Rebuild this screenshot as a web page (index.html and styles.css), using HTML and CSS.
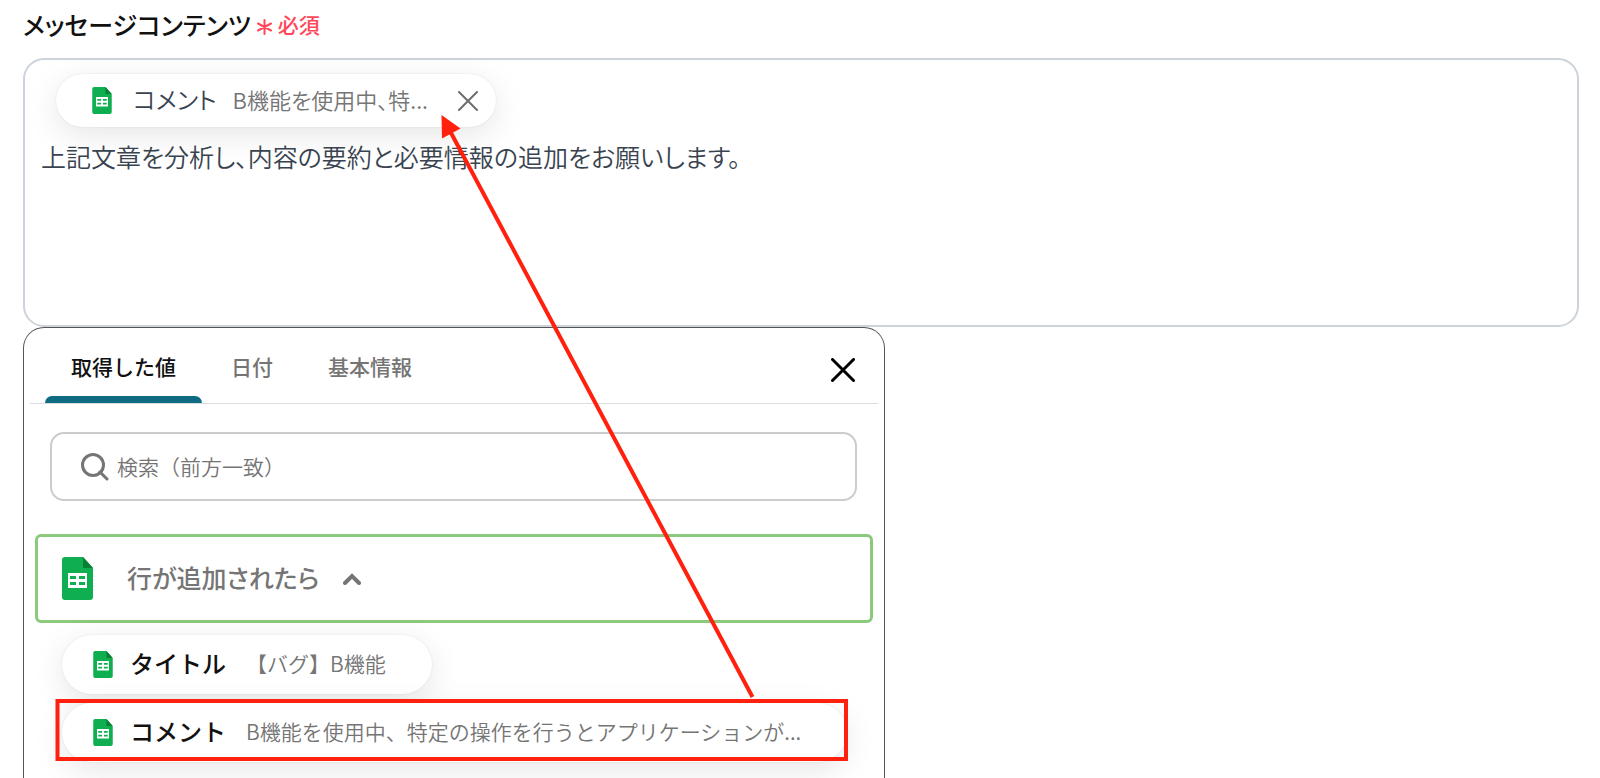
FILE: index.html
```html
<!DOCTYPE html>
<html lang="ja">
  <head>
    <meta charset="utf-8">
    <title>メッセージコンテンツ</title>
    <link rel="stylesheet" href="styles.css">
  </head>
  <body>
    <svg class="symbols" width="0" height="0">
      <symbol id="sheet" viewBox="0 0 31 43">
        <path fill="#0fae50" d="M3 0h18l10 11v29a3 3 0 0 1-3 3H3a3 3 0 0 1-3-3V3a3 3 0 0 1 3-3z"/>
        <path fill="#0a8132" d="M21 0l10 11H21z"/>
        <path fill="#fff" fill-rule="evenodd" d="M6 16h19v15H6zM8 19v3h6v-3zM17 19v3h6v-3zM8 25v3h6v-3zM17 25v3h6v-3z"/>
      </symbol>
    </svg>
    <div class="field">
      <div class="field-header">
        <label class="field-label" for="message">メッセージコンテンツ</label>
        <span class="required">
          <svg width="15" height="16" viewBox="0 0 15 16"><path d="M7.500 1v14M1 4.500l13 7M1 11.500l13-7"/></svg>
          必須
        </span>
      </div>
      <div class="editor">
        <div class="chip">
          <svg class="chip-icon"><use href="#sheet"/></svg>
          <span class="chip-name">コメント</span>
          <span class="chip-value">B機能を使用中、特...</span>
          <button class="chip-remove" type="button" aria-label="削除">
            <svg width="20" height="20" viewBox="0 0 20 20"><path d="M1 1l18 18M19 1L1 19"/></svg>
          </button>
        </div>
        <textarea class="message" id="message">上記文章を分析し、内容の要約と必要情報の追加をお願いします。</textarea>
      </div>
    </div>
    <div class="panel">
      <div class="panel-header">
        <div class="tabs" role="tablist">
          <button class="tab active" type="button" role="tab" aria-selected="true">取得した値</button>
          <button class="tab" type="button" role="tab">日付</button>
          <button class="tab" type="button" role="tab">基本情報</button>
        </div>
        <button class="panel-close" type="button" aria-label="閉じる">
          <svg width="24" height="24" viewBox="0 0 24 24"><path d="M1.500 1.500l21 21M22.500 1.500l-21 21"/></svg>
        </button>
      </div>
      <label class="search">
        <svg width="28" height="28" viewBox="0 0 28 28"><circle cx="12" cy="12" r="10.500"/><path d="M19 19l7 7"/></svg>
        <input type="search" placeholder="検索（前方一致）" aria-label="検索（前方一致）">
      </label>
      <button class="group" type="button" aria-expanded="true">
        <svg class="group-icon"><use href="#sheet"/></svg>
        <span class="group-name">行が追加されたら</span>
        <svg width="18" height="12" viewBox="0 0 18 12"><path class="chevron" d="M2 10l7-7 7 7"/></svg>
      </button>
      <div class="values">
        <button class="value" type="button">
          <svg class="chip-icon"><use href="#sheet"/></svg>
          <span class="value-name">タイトル</span>
          <span class="value-text">【バグ】B機能</span>
        </button>
        <button class="value" type="button">
          <svg class="chip-icon"><use href="#sheet"/></svg>
          <span class="value-name">コメント</span>
          <span class="value-text">B機能を使用中、特定の操作を行うとアプリケーションが...</span>
        </button>
      </div>
    </div>
    <svg class="annotation" width="900" height="778" viewBox="0 0 900 778">
      <rect x="57.500" y="701" width="788.500" height="58"/>
      <path class="arrow-line" d="M752.500 697L450 131"/>
      <path class="arrow-head" d="M441.500 115l19 13.500-18.500 10z"/>
    </svg>
  </body>
</html>
```
FILE: styles.css
```css
* {
  margin: 0;
  padding: 0;
  box-sizing: border-box;
}

body {
  position: relative;
  display: flex;
  flex-direction: column;
  height: 100vh;
  padding: 6px 21px 0 23px;
  background-color: #fff;
  color: #111;
  font-family: "Noto Sans CJK JP", sans-serif;
  font-size: 21px;
  line-height: 36px;
}

button,
input,
textarea {
  border: none;
  background: none;
  color: inherit;
  font: inherit;
}

button {
  cursor: pointer;
}

svg {
  flex: none;
  fill: none;
  stroke-linecap: round;
}

.symbols {
  position: absolute;
}

.field-header {
  display: flex;
  align-items: center;
  gap: 6px;
  height: 52px;
  padding-bottom: 16px;
}

.field-label {
  font-size: 25px;
  font-weight: 500;
  font-feature-settings: "palt";
}

.required {
  display: flex;
  align-items: center;
  gap: 6px;
  color: #ff4759;
  font-weight: 500;
}

.required svg {
  margin-top: 5px;
  stroke: #ff4759;
  stroke-width: 2;
}

.editor {
  height: 269px;
  padding: 14px 16px;
  border: 2px solid #cdd3da;
  border-radius: 21px;
  color: #39434f;
  font-feature-settings: "palt";
}

.chip {
  display: flex;
  align-items: center;
  width: fit-content;
  height: 53px;
  margin-left: 15px;
  padding: 0 18px 0 36px;
  border-radius: 27px;
  background-color: #fff;
  box-shadow: 0 8px 32px rgba(0, 0, 0, 0.1), 0 0 2px rgba(0, 0, 0, 0.1);
}

.chip-icon {
  width: 20px;
  height: 27px;
}

.chip-name {
  margin-left: 21px;
  padding-bottom: 3px;
  font-size: 24px;
  font-weight: 350;
}

.chip-value {
  margin-left: 16px;
  padding-bottom: 3px;
  color: #757575;
  font-size: 22px;
  font-weight: 350;
}

.chip-remove {
  display: flex;
  margin-left: 30px;
}

.chip-remove svg {
  stroke: #6e6e6e;
  stroke-width: 2;
}

.message {
  display: block;
  width: 100%;
  height: 160px;
  margin-top: 11px;
  outline: none;
  resize: none;
  font-size: 25px;
  font-weight: 350;
}

.panel {
  flex: 1;
  width: 100%;
  max-width: 862px;
  padding: 0 6px;
  border: 1px solid #555;
  border-bottom: none;
  border-radius: 21px 21px 0 0;
}

.panel-header {
  display: flex;
  justify-content: space-between;
  align-items: center;
  height: 76px;
  padding: 0 23px 0 15px;
  border-bottom: 1px solid #ddd;
}

.tabs {
  display: flex;
  align-self: stretch;
  gap: 3px;
}

.tab {
  position: relative;
  padding: 0 26px;
  color: #757575;
  font-weight: 500;
}

.tab.active {
  color: #111;
}

.tab.active::after {
  content: "";
  position: absolute;
  right: 0;
  bottom: 0;
  left: 0;
  height: 7px;
  border-radius: 7px 7px 0 0;
  background-color: #0f6a83;
}

.panel-close {
  display: flex;
}

.panel-close svg {
  margin-top: 8px;
  stroke: #000;
  stroke-width: 3;
}

.search {
  display: flex;
  align-items: center;
  gap: 8px;
  height: 69px;
  margin: 28px 21px 0 20px;
  padding: 0 29px;
  border: 2px solid #ccc;
  border-radius: 14px;
}

.search svg {
  stroke: #757575;
  stroke-width: 3;
}

.search input {
  flex: 1;
  padding-bottom: 2px;
  outline: none;
  font-weight: 350;
}

.search input::placeholder {
  color: #757575;
}

.group {
  display: flex;
  align-items: center;
  width: calc(100% - 10px);
  height: 89px;
  margin: 33px 5px 0;
  padding: 0 24px;
  border: 3px solid #8bc97d;
  border-radius: 6px;
  color: #757575;
}

.group-icon {
  width: 31px;
  height: 43px;
}

.group-name {
  margin: 0 24px 0 34px;
  padding-bottom: 3px;
  font-size: 25px;
  font-weight: 500;
  font-feature-settings: "palt";
}

.chevron {
  stroke: #757575;
  stroke-width: 4;
}

.values {
  display: flex;
  flex-direction: column;
  align-items: flex-start;
  gap: 9px;
  padding: 12px 24px 0 32px;
}

.value {
  display: flex;
  align-items: center;
  height: 59px;
  padding: 0 46px 0 31px;
  border-radius: 30px;
  background-color: #fff;
  box-shadow: 0 8px 32px rgba(0, 0, 0, 0.1), 0 0 2px rgba(0, 0, 0, 0.1);
}

.value-name {
  margin: 0 20px 0 17px;
  padding-bottom: 3px;
  font-size: 24px;
  font-weight: 500;
}

.value-text {
  padding-bottom: 3px;
  color: #757575;
  font-weight: 350;
}

/* Callout drawn over the form */
.annotation {
  position: absolute;
  top: 0;
  left: 0;
  pointer-events: none;
}

.annotation rect,
.arrow-line {
  stroke: #ff210d;
  stroke-width: 4;
  stroke-linecap: butt;
}

.arrow-head {
  fill: #ff210d;
}
```
